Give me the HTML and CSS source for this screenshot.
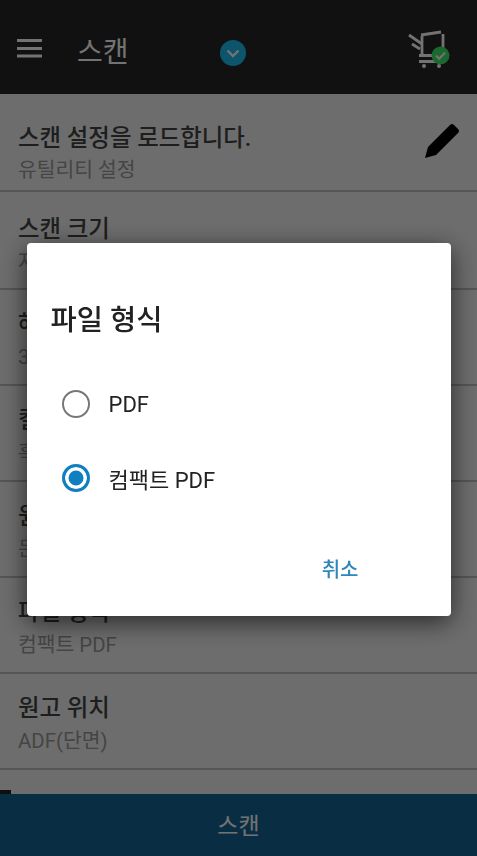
FILE: index.html
```html
<!doctype html>
<html lang="ko">
<head>
<meta charset="utf-8">
<title>스캔</title>
<link rel="stylesheet" href="styles.css">
</head>
<body>
<section class="page">
	<header class="top">
		<svg class="menu" width="26" height="20" viewBox="0 0 26 20"><path d="M0 2.5h25M0 10.5h25M0 18h25" stroke="#fff" stroke-width="2.8"/></svg>
		<h1 class="top-title">스캔</h1>
		<svg class="drop" width="26" height="26" viewBox="0 0 26 26"><circle cx="13" cy="13" r="13" fill="#1ebcf0"/><path d="M7.5 10.5l5.5 5.5 5.5-5.5" fill="none" stroke="#fff" stroke-width="2.4"/></svg>
		<svg class="printer" width="50" height="44" viewBox="0 0 50 44"><g fill="none" stroke="#fff" stroke-width="2.8"><path d="M4 9l13 9M7 18l8 5M16 9l20-3"/><path d="M17 10v19M38 8v14"/></g><path d="M14 28h20v3H14zM14 34h20v3H14z" fill="#fff"/><circle cx="19" cy="40" r="2" fill="#fff"/><circle cx="34" cy="40" r="2" fill="#fff"/><circle cx="35.5" cy="29.5" r="9" fill="#3ce868"/><path d="M31 29.5l3.2 3.2 5.8-6" fill="none" stroke="#fff" stroke-width="2"/></svg>
	</header>
	<nav class="list">
		<a class="row row-first">
			<div>
				<p class="row-title">스캔 설정을 로드합니다.</p>
				<p class="row-sub">유틸리티 설정</p>
			</div>
			<svg class="pencil" width="40" height="40" viewBox="0 0 40 40"><path d="M4 35l3-11L29 2q2-2 4 0l4 4q2 2 0 4L15 32z" fill="#000"/></svg>
		</a>
		<a class="row row-tall">
			<div>
				<p class="row-title">스캔 크기</p>
				<p class="row-sub">자동</p>
			</div>
		</a>
		<a class="row">
			<div>
				<p class="row-title">해상도</p>
				<p class="row-sub">300 dpi</p>
			</div>
		</a>
		<a class="row">
			<div>
				<p class="row-title">컬러 모드</p>
				<p class="row-sub">흑백</p>
			</div>
		</a>
		<a class="row">
			<div>
				<p class="row-title">원고 종류</p>
				<p class="row-sub">문서</p>
			</div>
		</a>
		<a class="row">
			<div>
				<p class="row-title">파일 형식</p>
				<p class="row-sub">컴팩트 PDF</p>
			</div>
		</a>
		<a class="row">
			<div>
				<p class="row-title">원고 위치</p>
				<p class="row-sub">ADF(단면)</p>
			</div>
		</a>
	</nav>
	<footer class="scan-bar">스캔</footer>
</section>
<div class="overlay">
	<section class="dialog">
		<h2 class="dialog-title">파일 형식</h2>
		<p class="option"><span class="radio"></span>PDF</p>
		<p class="option"><span class="radio radio-on"></span>컴팩트 PDF</p>
		<p class="actions"><a class="cancel">취소</a></p>
	</section>
</div>
</body>
</html>
```
FILE: styles.css
```css
html,body{margin:0;height:100%;}
body{font-family:Roboto,"Noto Sans CJK KR",sans-serif;background:#f2f2f2;overflow:hidden;}
p,h1,h2{margin:0;font-weight:normal;}

.page{height:856px;display:flex;flex-direction:column;}

.top{height:94px;flex:none;display:flex;align-items:center;background:#262626;position:relative;}
.menu{margin:0 0 0 17px;position:relative;top:1px;}
.top-title{margin:12px 0 0 34px;font-size:28px;line-height:36px;color:#fff;}
.drop{margin-left:91px;position:relative;top:6px;}
.printer{margin-left:159px;position:relative;top:1px;}

.list{flex:1;overflow:hidden;}
.row{display:flex;justify-content:space-between;box-sizing:border-box;height:96px;padding:19px 16px 0 18px;border-bottom:2px solid #bdbdbd;}
.row-first{height:98px;padding-top:29px;}
.row-tall{height:98px;padding-top:22px;}
.row-title{font-size:23.4px;font-weight:500;line-height:30px;color:#444;}
.row-sub{margin-top:3px;font-size:20.4px;line-height:30px;color:#999;}
.row-first .row-sub{margin-top:2px;}

.scan-bar{height:62px;flex:none;box-sizing:border-box;padding-top:4px;position:relative;background:#166493;color:#fff;font-size:23px;line-height:58px;text-align:center;}
.scan-bar:before{content:"";position:absolute;left:0;top:-4px;width:11px;height:4px;background:#222;}

.overlay{position:fixed;left:0;top:0;right:0;bottom:0;padding-top:3px;box-sizing:border-box;display:flex;align-items:center;justify-content:center;background:rgba(0,0,0,.55);}
.dialog{width:424px;height:373px;box-sizing:border-box;padding:59px 0 0;background:#fff;border-radius:4px;box-shadow:0 6px 26px rgba(0,0,0,.65);}
.dialog-title{margin-left:24px;font-size:28.5px;font-weight:500;line-height:38px;color:#222;}
.option{display:flex;align-items:center;gap:19px;height:74px;padding-left:35px;font-size:22px;color:#222;}
.option:first-of-type{margin-top:27px;}
.radio{width:28px;height:28px;box-sizing:border-box;border:2.5px solid #777;border-radius:50%;}
.radio-on{border:3.5px solid #0f7fc0;background:#0f7fc0;box-shadow:inset 0 0 0 3.5px #fff;}
.actions{display:flex;justify-content:flex-end;padding:37px 92px 0 0;}
.cancel{font-size:20px;font-weight:500;line-height:36px;color:#2f86bb;}
```
